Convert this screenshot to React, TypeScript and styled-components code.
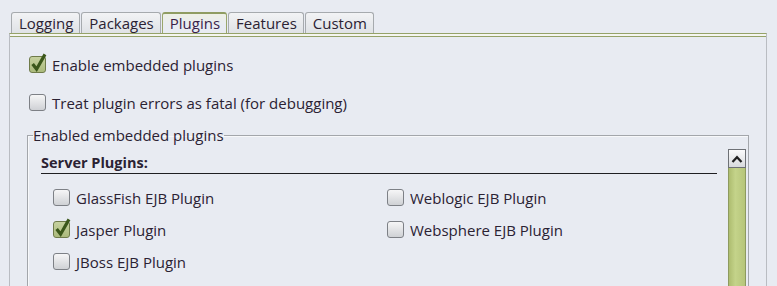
import React, { useState } from 'react';
import styled, { createGlobalStyle, css } from 'styled-components';

const GlobalStyle = createGlobalStyle`
  html, body {
    margin: 0;
    padding: 0;
    background: #e8ebf2;
    overflow: hidden;
  }
  body {
    font-family: 'Open Sans', 'DejaVu Sans', sans-serif;
    font-size: 15px;
    color: #2b2233;
  }
`;

const Window = styled.div`
  width: 777px;
  height: 286px;
  box-sizing: border-box;
  padding: 12px 10px 0 9px;
  display: flex;
  flex-direction: column;
`;

const TabBar = styled.div`
  display: flex;
  gap: 1px;
  padding-left: 2px;
  height: 21px;
`;

const Tab = styled.div<{ active?: boolean }>`
  box-sizing: border-box;
  height: 21px;
  padding: 0 6px 0 7px;
  display: flex;
  align-items: center;
  border: 1px solid #a6aaae;
  border-bottom: none;
  border-radius: 3px 3px 0 0;
  background: linear-gradient(#f2f3f5, #dfe2e6);
  color: #2b2233;
  font-size: 15px;
  line-height: 1;
  cursor: default;

  ${({ active }) =>
    active &&
    css`
      border-color: #9aa66c;
      border-top: 2px solid #8f9c62;
      background: linear-gradient(#eef0e6, #e8ebf2 60%);
      color: #3a1f4a;
    `}
`;

const Panel = styled.div`
  flex: 1;
  box-sizing: border-box;
  border-left: 1px solid #b9bcc2;
  border-right: 1px solid #b9bcc2;
  border-top: 1px solid #95a268;
  box-shadow: inset 0 2px 0 #f4f5f0, inset 0 3px 0 #95a268;
  padding: 22px 17px 0 19px;
  display: flex;
  flex-direction: column;
`;

const OptionRow = styled.label<{ spacing?: number }>`
  display: flex;
  align-items: center;
  gap: 6px;
  height: 17px;
  margin-bottom: ${({ spacing }) => spacing ?? 0}px;
  cursor: default;
`;

const Box = styled.span<{ checked?: boolean }>`
  position: relative;
  box-sizing: border-box;
  width: 17px;
  height: 17px;
  flex: none;
  border: 1px solid #7d8086;
  border-radius: 3px;
  background: linear-gradient(#f6f6f7, #cfd1d5);

  ${({ checked }) =>
    checked &&
    css`
      border-color: #6f7b4a;
      background: linear-gradient(#c6d19f, #abba7c);
    `}
`;

const CheckMark = styled.svg`
  position: absolute;
  left: 1px;
  top: -3px;
  overflow: visible;
`;

const Group = styled.fieldset`
  margin: 17px 0 0 -2px;
  padding: 6px 2px 0 13px;
  border: 1px solid #a3a6ab;
  border-bottom: none;
  box-shadow: inset 1px 1px 0 #f7f8fa;
  display: flex;
  min-width: 0;
  flex: 1;
`;

const Legend = styled.legend`
  padding: 0;
  margin-left: -8px;
  font-size: 15px;
  line-height: 15px;
`;

const GroupBody = styled.div`
  flex: 1;
  display: flex;
  flex-direction: column;
`;

const SectionTitle = styled.div`
  font-weight: bold;
  font-size: 14.5px;
  line-height: 18px;
  margin-top: 5px;
  padding-bottom: 1px;
  border-bottom: 1px solid #1f1f22;
  margin-bottom: 15px;
`;

const PluginGrid = styled.div`
  display: grid;
  grid-template-columns: 334px 1fr;
  row-gap: 15px;
  padding-left: 12px;
`;

const ScrollBar = styled.div`
  width: 18px;
  margin: 0 0 0 11px;
  display: flex;
  flex-direction: column;
  flex: none;
`;

const ScrollButton = styled.div`
  box-sizing: border-box;
  height: 19px;
  border: 1px solid #6e7176;
  background: linear-gradient(#fbfbfc, #d8dadd);
  display: flex;
  align-items: center;
  justify-content: center;
`;

const ScrollTrack = styled.div`
  flex: 1;
  border-left: 1px solid #8d9a5f;
  border-right: 1px solid #8d9a5f;
  background: linear-gradient(90deg, #aebd70, #c4d38a 40%, #b6c57a);
`;

const Check = () => (
  <CheckMark width="15" height="18" viewBox="0 0 15 18">
    <path
      d="M2.6 11.2 L5.6 15.2 L13.2 1.8"
      fill="none"
      stroke="#3b571a"
      strokeWidth="3.2"
      strokeLinecap="square"
      strokeLinejoin="miter"
    />
  </CheckMark>
);

const CaretUp = () => (
  <svg width="12" height="8" viewBox="0 0 12 8">
    <path
      d="M1.5 7 L6 2.2 L10.5 7"
      fill="none"
      stroke="#222"
      strokeWidth="2.2"
    />
  </svg>
);

const CheckOption = ({
  label,
  defaultChecked,
  spacing,
}: {
  label: string;
  defaultChecked?: boolean;
  spacing?: number;
}) => {
  const [checked, setChecked] = useState(!!defaultChecked);
  return (
    <OptionRow spacing={spacing} onClick={() => setChecked(!checked)}>
      <Box checked={checked}>{checked && <Check />}</Box>
      <span>{label}</span>
    </OptionRow>
  );
};

const tabs = ['Logging', 'Packages', 'Plugins', 'Features', 'Custom'];

const plugins = [
  { label: 'GlassFish EJB Plugin' },
  { label: 'Weblogic EJB Plugin' },
  { label: 'Jasper Plugin', checked: true },
  { label: 'Websphere EJB Plugin' },
  { label: 'JBoss EJB Plugin' },
];

const App = () => {
  const [activeTab, setActiveTab] = useState('Plugins');

  return (
    <>
      <GlobalStyle />
      <Window>
        <TabBar>
          {tabs.map((tab) => (
            <Tab
              key={tab}
              active={tab === activeTab}
              onClick={() => setActiveTab(tab)}
            >
              {tab}
            </Tab>
          ))}
        </TabBar>
        <Panel>
          <CheckOption label="Enable embedded plugins" defaultChecked spacing={21} />
          <CheckOption label="Treat plugin errors as fatal (for debugging)" />
          <Group>
            <Legend>Enabled embedded plugins</Legend>
            <GroupBody>
              <SectionTitle>Server Plugins:</SectionTitle>
              <PluginGrid>
                {plugins.map((p) => (
                  <CheckOption
                    key={p.label}
                    label={p.label}
                    defaultChecked={p.checked}
                  />
                ))}
              </PluginGrid>
            </GroupBody>
            <ScrollBar>
              <ScrollButton>
                <CaretUp />
              </ScrollButton>
              <ScrollTrack />
            </ScrollBar>
          </Group>
        </Panel>
      </Window>
    </>
  );
};

export default App;
